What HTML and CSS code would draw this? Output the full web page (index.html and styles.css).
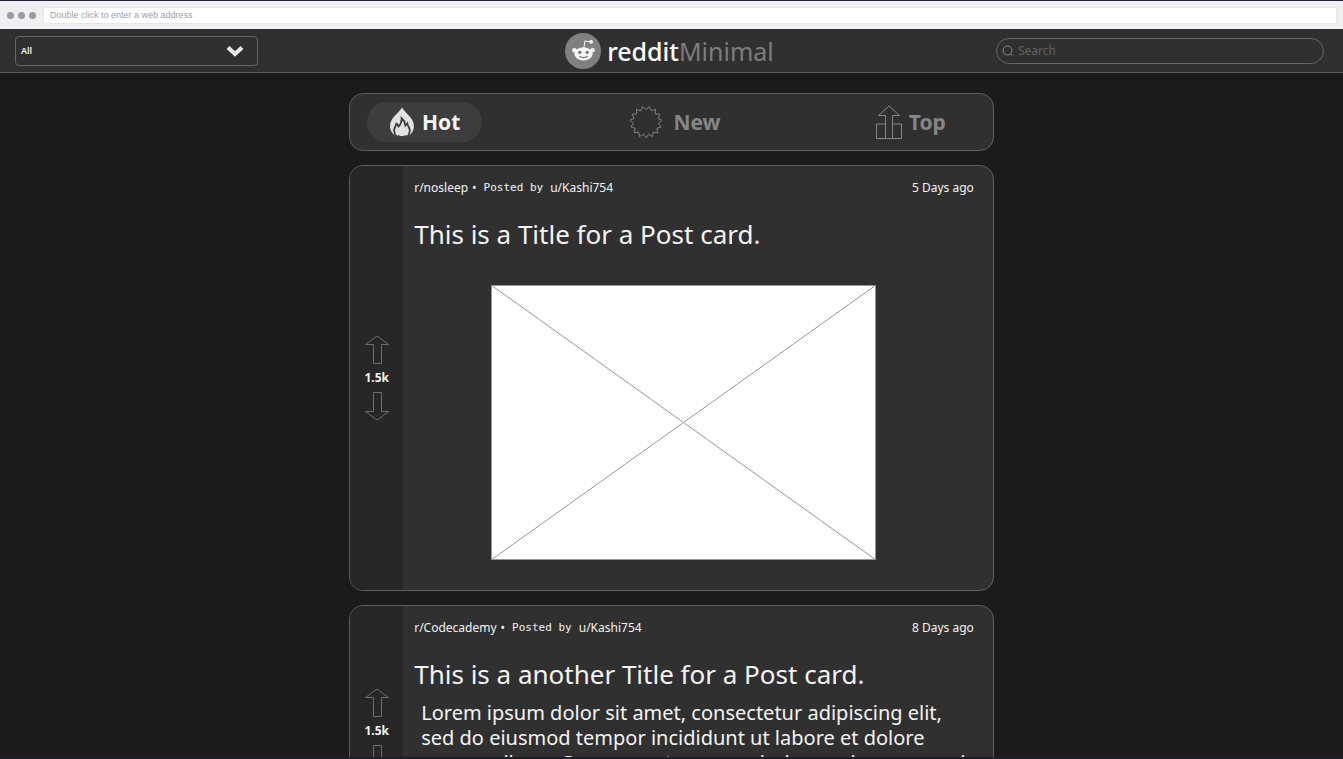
FILE: index.html
```html
<!DOCTYPE html>
<html lang="en">
<head>
<meta charset="utf-8">
<title>redditMinimal</title>
<link rel="stylesheet" href="styles.css">
</head>
<body>
<div class="browser-bar">
  <span class="dots"><i class="dot"></i><i class="dot"></i><i class="dot"></i></span>
  <input class="address" type="text" aria-label="Web address" placeholder="Double click to enter a web address">
</div>
<header class="site-header">
  <div class="header-side">
    <div class="feed-picker">
      <select class="feed-select" aria-label="Feed"><option>All</option></select>
      <svg class="chevron" viewBox="0 0 18 12" aria-hidden="true"><path d="M2 2.500L9 9L16 2.500" fill="none" stroke="#e8e8e8" stroke-width="4.200"/></svg>
    </div>
  </div>
  <a class="brand" href="#">
    <svg class="brand-logo" viewBox="0 0 36 36" aria-hidden="true">
      <circle cx="18" cy="18" r="18" fill="#808080"/>
      <g fill="#f4f4f4">
        <circle cx="9.500" cy="17.300" r="2.300"/><circle cx="27.500" cy="17.300" r="2.300"/>
        <ellipse cx="18.500" cy="20.800" rx="9.200" ry="6.600"/>
        <circle cx="26.200" cy="8.800" r="1.900"/>
      </g>
      <path d="M19 14.500L19.800 8L25.500 8.800" fill="none" stroke="#f4f4f4" stroke-width="1"/>
      <circle cx="14.800" cy="19.300" r="1.600" fill="#707070"/><circle cx="22.200" cy="19.300" r="1.600" fill="#707070"/>
      <path d="M14.300 23.300Q18.500 26 22.700 23.300" fill="none" stroke="#707070" stroke-width="1.100"/>
    </svg>
    <span class="brand-name">reddit<span class="brand-light">Minimal</span></span>
  </a>
  <div class="header-side header-end">
    <label class="search">
      <svg class="search-icon" viewBox="0 0 12 12" aria-hidden="true"><circle cx="5.500" cy="5.500" r="4.500" fill="none" stroke="#8a8a8a"/><path d="M8 8.500L10.500 10.500" stroke="#8a8a8a"/></svg>
      <input class="search-input" type="search" aria-label="Search" placeholder="Search">
    </label>
  </div>
</header>
<main class="feed">
  <nav class="tabs">
    <button class="tab tab-active" type="button">
      <svg class="icon-hot" viewBox="0 0 26 30" aria-hidden="true">
        <path d="M13 .5C16 6 25 11 25 19C25 24 22 28 18 29.500H8C4 28 1 24 1 19C1 11 10 6 13 .5Z" fill="#e2e2e2"/>
        <path d="M8 30C5.500 27.500 4.800 25 5.200 22.500C5.600 20 7.500 18.500 7.300 16L9.600 19.500C12 17 12.800 14 12.600 11C15.500 13.500 16 16 16.400 18.500L18.300 16.500C18.500 19 20.800 20.500 20.800 23.500C20.800 26 20 28 18 30" fill="none" stroke="#3d3d3d" stroke-width="1.800"/>
        <path d="M8 29.200C11 30.800 15 30.800 18 29.200L17 28C14.500 29.500 11.500 29.500 9 28Z" fill="#3d3d3d"/>
      </svg>
      <span>Hot</span>
    </button>
    <button class="tab tab-new" type="button">
      <svg class="icon-new" viewBox="0 0 34 34" aria-hidden="true"><path d="M17 33L14.400 29.200L10.500 31.600L9.700 27.100L5.100 27.700L6.200 23.300L1.800 21.900L4.600 18.300L1 15.300L5.100 13.300L3.100 9.100L7.700 8.900L7.500 4.200L11.700 5.900L13.500 1.600L17 4.600L20.500 1.600L22.300 5.900L26.500 4.200L26.300 8.900L30.900 9.100L28.900 13.300L33 15.300L29.400 18.300L32.200 21.900L27.800 23.300L28.900 27.700L24.300 27.100L23.500 31.600L19.600 29.200Z" fill="none" stroke="#808080"/></svg>
      <span>New</span>
    </button>
    <button class="tab tab-top" type="button">
      <svg class="icon-top" viewBox="0 0 26 34" aria-hidden="true"><path d="M9.500 33.500V10.500H2.500L13 1L23.500 10.500H16.500V33.500M9.500 19H.5V33.500H25.500V19H16.500" fill="none" stroke="#858585"/></svg>
      <span>Top</span>
    </button>
  </nav>

  <article class="post">
    <div class="votes">
      <button class="vote" type="button" aria-label="Upvote"><svg class="arrow" viewBox="0 0 24 30" aria-hidden="true"><path d="M12 1L23.500 9.500H16.500V28.500H8.500V9.500H.5Z" fill="none" stroke="#6e6e6e"/></svg></button>
      <span class="score">1.5k</span>
      <button class="vote" type="button" aria-label="Downvote"><svg class="arrow" viewBox="0 0 24 30" aria-hidden="true"><path d="M12 29L23.500 20.500H16.500V1.500H8.500V20.500H.5Z" fill="none" stroke="#6e6e6e"/></svg></button>
    </div>
    <div class="post-body">
      <div class="meta">
        <a class="meta-link" href="#">r/nosleep</a><span class="bullet">•</span><span class="posted">Posted by</span><a class="meta-link" href="#">u/Kashi754</a>
        <time class="age">5 Days ago</time>
      </div>
      <h2 class="title">This is a Title for a Post card.</h2>
      <svg class="placeholder" viewBox="0 0 385 275" role="img" aria-label="Image placeholder"><rect x=".5" y=".5" width="384" height="274" fill="#fff" stroke="#979797"/><path d="M0 0L385 275M385 0L0 275" stroke="#979797"/></svg>
    </div>
  </article>

  <article class="post">
    <div class="votes">
      <button class="vote" type="button" aria-label="Upvote"><svg class="arrow" viewBox="0 0 24 30" aria-hidden="true"><path d="M12 1L23.500 9.500H16.500V28.500H8.500V9.500H.5Z" fill="none" stroke="#6e6e6e"/></svg></button>
      <span class="score">1.5k</span>
      <button class="vote" type="button" aria-label="Downvote"><svg class="arrow" viewBox="0 0 24 30" aria-hidden="true"><path d="M12 29L23.500 20.500H16.500V1.500H8.500V20.500H.5Z" fill="none" stroke="#6e6e6e"/></svg></button>
    </div>
    <div class="post-body">
      <div class="meta">
        <a class="meta-link" href="#">r/Codecademy</a><span class="bullet">•</span><span class="posted">Posted by</span><a class="meta-link" href="#">u/Kashi754</a>
        <time class="age">8 Days ago</time>
      </div>
      <h2 class="title">This is a another Title for a Post card.</h2>
      <p class="text">Lorem ipsum dolor sit amet, consectetur adipiscing elit,<br>sed do eiusmod tempor incididunt ut labore et dolore magna aliqua. Cursus eget nunc scelerisque viverra mauris in aliquam sem fringilla. Viverra nam libero justo laoreet sit amet cursus sit.</p>
    </div>
  </article>
</main>
</body>
</html>
```
FILE: styles.css
```css
* { box-sizing: border-box; }

body {
  margin: 0;
  height: 100vh;
  display: flex;
  flex-direction: column;
  overflow: hidden;
  background: #1b1b1b;
  color: #f4f4f4;
  font-family: "Noto Sans", "Open Sans", sans-serif;
  border-top: 1px solid #252432;
  border-bottom: 2px solid #1b2030;
}

a { color: inherit; text-decoration: none; }
button { margin: 0; padding: 0; border: 0; background: none; color: inherit; font: inherit; }
svg { display: block; flex: none; }

.browser-bar {
  flex: none;
  height: 28px;
  padding: 0 6px 0 7px;
  display: flex;
  align-items: center;
  gap: 7px;
  background: #eeeef3;
}
.dots { display: flex; gap: 4px; }
.dot { width: 7px; height: 7px; border-radius: 50%; background: #9b9b9b; }
.address {
  flex: 1;
  height: 17px;
  padding: 0 6px;
  border: 1px solid #e6e6e6;
  background: #fff;
  font: 9px "Liberation Sans", sans-serif;
}
.address::placeholder { color: #9a9fb4; opacity: 1; }

.site-header {
  flex: none;
  height: 44px;
  padding: 0 19px 0 15px;
  display: flex;
  align-items: center;
  background: #303030;
  border-bottom: 1px solid #5c5c5c;
}
.header-side { flex: 1; display: flex; }
.header-end { justify-content: flex-end; }
.feed-picker { width: 243px; display: grid; align-items: center; }
.feed-select {
  grid-area: 1 / 1;
  appearance: none;
  height: 30px;
  padding: 0 5px;
  border: 1px solid #666;
  border-radius: 4px;
  background: #303030;
  color: #f4f4f4;
  font: 600 9px "Noto Sans", sans-serif;
}
.chevron { grid-area: 1 / 1; justify-self: end; width: 18px; height: 12px; margin-right: 14px; pointer-events: none; }

.brand { display: flex; align-items: center; gap: 6px; }
.brand-logo { width: 36px; height: 36px; }
.brand-name { color: #fff; font-size: 25px; line-height: 36px; font-weight: 500; }
.brand-light { color: #7d7d7d; font-weight: 400; }

.search {
  width: 328px;
  height: 26px;
  padding: 0 5px;
  display: flex;
  align-items: center;
  gap: 4px;
  border: 1px solid #666;
  border-radius: 13px;
}
.search-icon { width: 12px; height: 12px; }
.search-input { flex: 1; min-width: 0; padding: 0; border: 0; outline: 0; background: none; color: #f4f4f4; font: 12px "Noto Sans", sans-serif; }
.search-input::placeholder { color: #606060; opacity: 1; }

.feed {
  flex: 1;
  min-height: 0;
  width: 48%;
  margin: 0 auto;
  padding-top: 20px;
  display: flex;
  flex-direction: column;
  gap: 14px;
  overflow: hidden;
}

.tabs {
  flex: none;
  height: 58px;
  padding: 0 17px;
  display: flex;
  align-items: center;
  justify-content: space-between;
  background: #303030;
  border: 1px solid #5c5c5c;
  border-radius: 14px;
}
.tab {
  height: 40px;
  display: flex;
  align-items: center;
  justify-content: center;
  gap: 7px;
  color: #858585;
  font-size: 21px;
  font-weight: 700;
}
.tab-active { width: 115px; border-radius: 20px; background: #3d3d3d; color: #f4f4f4; }
.tab-new { gap: 10px; padding-right: 8px; }
.tab-top { padding-right: 30px; }
.icon-hot { width: 26px; height: 30px; }
.icon-new { width: 34px; height: 34px; }
.icon-top { width: 26px; height: 34px; }

.post {
  flex: none;
  display: flex;
  background: #303030;
  border: 1px solid #5c5c5c;
  border-radius: 14px;
  overflow: hidden;
}
.votes {
  width: 53px;
  display: flex;
  flex-direction: column;
  align-items: center;
  justify-content: center;
  gap: 4px;
  background: #272727;
}
.arrow { width: 24px; height: 30px; }
.score { font-size: 12px; line-height: 18px; font-weight: 700; }

.post-body { flex: 1; min-width: 0; padding: 12px 8px 30px 11px; }
.meta { display: flex; align-items: center; padding-right: 11px; font-size: 12px; line-height: 20px; }
.bullet { margin: 0 7px 0 4px; }
.posted { margin-right: 7px; font: 11px/20px "DejaVu Sans Mono", monospace; }
.age { margin-left: auto; }
.title { margin: 16px 0 0; font-size: 26px; line-height: 40px; font-weight: 400; }
.placeholder { width: 385px; max-width: 100%; height: auto; margin: 31px auto 0 77px; }
.text { margin: 6px 3px 0 7px; font-size: 20px; line-height: 25px; }
```
